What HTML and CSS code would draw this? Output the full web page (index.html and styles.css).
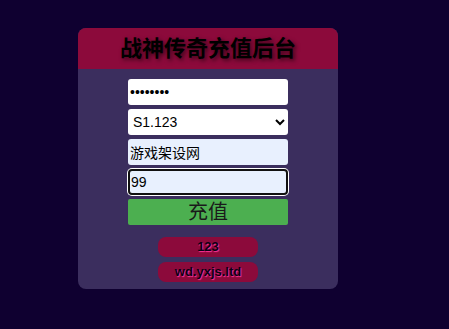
FILE: index.html
```html
<!DOCTYPE html>
<html lang="zh-CN">
<head>
    <meta charset="UTF-8">
    <meta name="viewport" content="width=device-width, initial-scale=1.0">
    <link rel="stylesheet" href="styles.css">
</head>
<body>

<div class="panel">
    <div class="panel-title">战神传奇充值后台</div>
    <form class="panel-form" onsubmit="return false">
        <input class="field" type="password" value="12345678">
        <select class="field">
            <option>S1.123</option>
        </select>
        <input class="field autofill" type="text" value="游戏架设网">
        <input class="field autofill focused" type="text" value="99">
        <button class="pay-btn" type="submit">充值</button>
    </form>
    <div class="links">
        <a class="pill">123</a>
        <a class="pill">wd.yxjs.ltd</a>
    </div>
</div>

</body>
</html>
```

FILE: styles.css
```css
body {
    margin: 0;
    height: 329px;
    background: #0f0030;
    font-family: "Liberation Sans", Arial, "Noto Sans CJK SC", sans-serif;
    padding: 28px 0 0 78px;
    box-sizing: border-box;
}
.panel {
    width: 260px;
    height: 261px;
    background: #3b2e5e;
    border-radius: 8px;
}
.panel-title {
    height: 41px;
    background: #8c0a3b;
    border-radius: 8px 8px 0 0;
    color: #000;
    font-size: 22px;
    font-weight: bold;
    text-align: center;
    line-height: 41px;
    text-shadow: 2px 2px 4px rgba(0, 0, 0, 0.6);
}
.panel-form {
    display: flex;
    flex-direction: column;
    align-items: center;
    gap: 4px;
    padding-top: 10px;
}
.field {
    width: 160px;
    height: 26px;
    box-sizing: border-box;
    border: none;
    border-radius: 3px;
    background: #fff;
    padding: 0 2px;
    font-family: "Liberation Sans", Arial, "Noto Sans CJK SC", sans-serif;
    font-size: 14px;
    color: #000;
    outline: none;
}
select.field {
    padding: 0 1px;
}
.autofill {
    background: #e8f0fe;
}
.focused {
    border: 2px solid #111;
    border-radius: 4px;
    box-shadow: 0 0 0 1px #fff;
    padding: 0 1px;
}
.pay-btn {
    width: 160px;
    height: 26px;
    border: none;
    border-radius: 2px;
    background: #4caf50;
    color: #1a1a1a;
    font-family: "Liberation Sans", Arial, "Noto Sans CJK SC", sans-serif;
    font-size: 20px;
    padding: 0;
    line-height: 26px;
}
.links {
    display: flex;
    flex-direction: column;
    align-items: center;
    gap: 5px;
    padding-top: 12px;
}
.pill {
    width: 100px;
    height: 20px;
    border-radius: 8px;
    background: #8c0a3b;
    color: #0a0014;
    font-size: 13px;
    font-weight: bold;
    text-align: center;
    line-height: 20px;
    text-shadow: 1px 1px 1px #ff3399;
}
```
